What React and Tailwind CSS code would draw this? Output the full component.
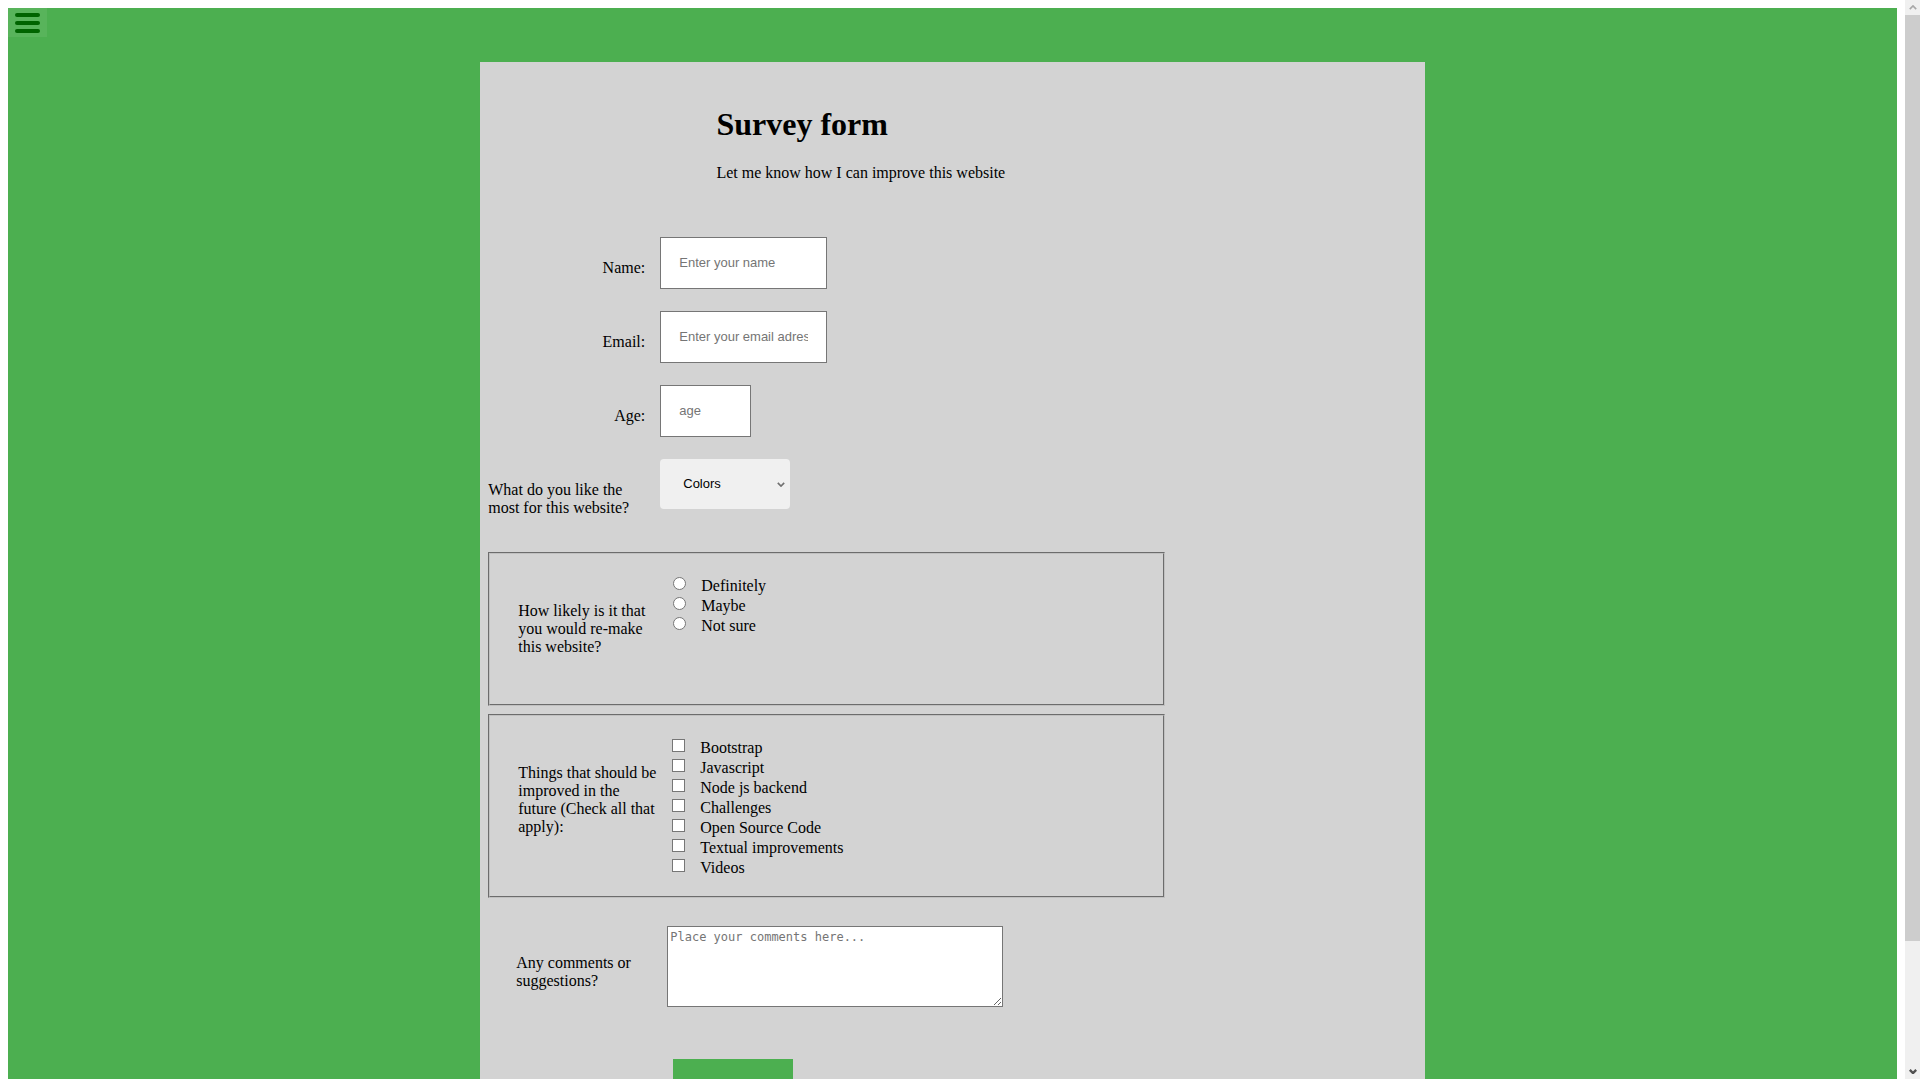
const radios = ["Definitely", "Maybe", "Not sure"];
const improvements = [
  "Bootstrap",
  "Javascript",
  "Node js backend",
  "Challenges",
  "Open Source Code",
  "Textual improvements",
  "Videos",
];

const inputClass =
  "h-[52px] border border-[#767676] bg-white px-[18px] pb-[2px] font-['Liberation_Sans',Arial,sans-serif] text-[13px] text-black placeholder:text-[#757575] outline-none";

function Field({ id, label, children, wide }) {
  return (
    <div className="flex items-start gap-[15px]">
      <label
        htmlFor={id}
        className={`w-[157px] shrink-0 pt-[22px] ${wide ? "text-left" : "text-right"}`}
      >
        {label}
      </label>
      {children}
    </div>
  );
}

function ChoiceGroup({ title, type, name, options, className, listClass, boxClass }) {
  const titleId = `${name}-title`;
  return (
    <fieldset
      aria-labelledby={titleId}
      className={`flex w-[72.9%] items-start border-2 border-[#c0c0c0] pl-[28px] pt-[21px] [border-style:groove] ${className}`}
    >
      <div id={titleId} className="w-[140px] shrink-0 pt-[27px]">
        {title}
      </div>
      <div className={`pt-px ${listClass}`}>
        {options.map((option) => (
          <label key={option} className="flex h-5 items-start leading-5">
            <input
              type={type}
              name={name}
              value={option}
              className={`mr-[15px] mt-px size-[13px] shrink-0 appearance-none border border-[#767676] bg-white ${boxClass}`}
            />
            {option}
          </label>
        ))}
      </div>
    </fieldset>
  );
}

function Chevron({ className, d, weight = 2 }) {
  return (
    <svg viewBox="0 0 10 6" className={className} fill="none" stroke="currentColor" strokeWidth={weight} aria-hidden="true">
      <path d={d} />
    </svg>
  );
}

function ScrollTrack() {
  return (
    <div className="flex w-[15px] shrink-0 flex-col bg-[#f0f0f0]" aria-hidden="true">
      <div className="flex h-[15px] items-center justify-center text-[#a8a8a8]">
        <Chevron className="h-[5px] w-2" d="M1 5L5 1L9 5" />
      </div>
      <div className="grow-[926] bg-[#cdcdcd]" />
      <div className="grow-[123]" />
      <div className="flex h-[15px] items-center justify-center text-[#505050]">
        <Chevron className="h-[5px] w-2" d="M1 1L5 5L9 1" weight={3} />
      </div>
    </div>
  );
}

export default function App() {
  return (
    <div className="flex h-screen overflow-hidden bg-white font-['Liberation_Serif','Times_New_Roman',serif] text-base leading-[18px] text-black">
      <div className="min-w-0 flex-1 overflow-hidden px-2 pt-2">
        <div className="min-h-full bg-[#4caf50] pb-16">
          <button
            type="button"
            aria-label="Menu"
            className="mb-[25px] flex h-[29px] w-[39px] flex-col gap-1 bg-[#58b45b] pl-[7px] pt-[5px]"
          >
            <span className="h-1 w-[25px] rounded-full bg-[#006400]" />
            <span className="h-1 w-[25px] rounded-full bg-[#006400]" />
            <span className="h-1 w-[25px] rounded-full bg-[#006400]" />
          </button>

          <main className="mx-auto w-1/2 bg-[#d3d3d3] pb-16 pt-[44px]">
            <header className="pl-[25%]">
              <h1 className="text-[32px] font-bold leading-[37px]">Survey form</h1>
              <p className="mt-[21px]">Let me know how I can improve this website</p>
            </header>

            <form className="mt-[55px] px-2">
              <div className="flex flex-col gap-[22px]">
                <Field id="name" label="Name:">
                  <input id="name" type="text" placeholder="Enter your name" className={`${inputClass} w-[167px]`} />
                </Field>
                <Field id="email" label="Email:">
                  <input id="email" type="email" placeholder="Enter your email adress" className={`${inputClass} w-[167px]`} />
                </Field>
                <Field id="age" label="Age:">
                  <input id="age" type="text" inputMode="numeric" placeholder="age" className={`${inputClass} w-[91px]`} />
                </Field>
                <Field id="favourite" label="What do you like the most for this website?" wide>
                  <div className="relative">
                    <select
                      id="favourite"
                      className="h-[50px] w-[130px] appearance-none rounded bg-[#f0f0f0] pl-[23px] font-['Liberation_Sans',Arial,sans-serif] text-[13px]"
                    >
                      <option>Colors</option>
                    </select>
                    <Chevron
                      className="pointer-events-none absolute right-[5px] top-[23px] h-[5px] w-2 text-[#707070]"
                      d="M1 1L5 5L9 1"
                    />
                  </div>
                </Field>
              </div>

              <ChoiceGroup
                title="How likely is it that you would re-make this website?"
                type="radio"
                name="likelihood"
                options={radios}
                className="mt-[35px] min-h-[154px]"
                listClass="pl-[15px]"
                boxClass="rounded-full"
              />
              <ChoiceGroup
                title="Things that should be improved in the future (Check all that apply):"
                type="checkbox"
                name="improvements"
                options={improvements}
                className="mt-2 min-h-[184px]"
                listClass="pl-[14px]"
                boxClass=""
              />

              <div className="mt-7 flex items-start gap-[11px] pl-7">
                <label htmlFor="comments" className="w-[140px] shrink-0 pt-[28px]">
                  Any comments or suggestions?
                </label>
                <textarea
                  id="comments"
                  placeholder="Place your comments here..."
                  className="h-[81px] w-[336px] resize border border-[#767676] bg-white p-[2px] font-['DejaVu_Sans_Mono',monospace] text-xs leading-4 placeholder:text-[#757575]"
                />
              </div>

              <button type="submit" aria-label="Submit" className="ml-[185px] mt-[52px] block h-12 w-[120px] bg-[#4caf50]" />
            </form>
          </main>
        </div>
      </div>
      <ScrollTrack />
    </div>
  );
}
